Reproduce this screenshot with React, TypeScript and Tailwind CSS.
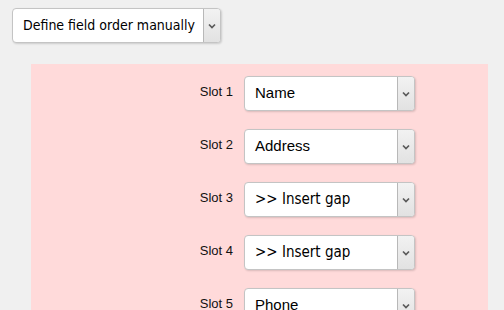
import React from 'react'

const TAHOMA = "font-['DejaVu_Sans_Condensed','DejaVu_Sans',sans-serif]"
const ARIAL = "font-['Liberation_Sans',Arial,sans-serif]"

function Chevron() {
  return (
    <svg width="8" height="6" viewBox="0 0 8 6" className="text-[#5a5a5a]">
      <path d="M1 1.5 L4 4.5 L7 1.5" fill="none" stroke="currentColor" strokeWidth="1.7" />
    </svg>
  )
}

function FakeSelect({
  value,
  width,
  font,
  size = 'text-[15px]',
}: {
  value: string
  width: string
  font: string
  size?: string
}) {
  return (
    <div
      className={`flex h-[35px] ${width} shrink-0 overflow-hidden rounded-[4px] border border-[#c4c4c4] bg-white shadow-[1px_1px_2px_rgba(0,0,0,0.15)]`}
    >
      <div className={`flex flex-1 items-center whitespace-nowrap pl-[10px] ${size} text-black ${font}`}>
        {value}
      </div>
      <div className="flex w-[17px] items-center justify-center border-l border-[#b8b8b8] bg-gradient-to-b from-[#f2f2f2] to-[#e2e2e2]">
        <Chevron />
      </div>
    </div>
  )
}

const slots = [
  { label: 'Slot 1', value: 'Name', font: ARIAL },
  { label: 'Slot 2', value: 'Address', font: ARIAL },
  { label: 'Slot 3', value: '>> Insert gap', font: TAHOMA },
  { label: 'Slot 4', value: '>> Insert gap', font: TAHOMA },
  { label: 'Slot 5', value: 'Phone', font: ARIAL },
]

export default function App() {
  return (
    <div className="h-[310px] w-full overflow-hidden bg-[#f0f0f0]">
      <div className="pl-[12px] pt-[8px]">
        <FakeSelect value="Define field order manually" width="w-[209px]" font={TAHOMA} size="text-[14px]" />
      </div>
      <div className="ml-[31px] mr-[16px] mt-[21px] flex flex-col gap-[18px] bg-[#ffdada] pt-[12px] pb-6">
        {slots.map((s) => (
          <div key={s.label} className="flex items-start">
            <div className={`w-[213px] shrink-0 pr-[11px] pt-[6px] text-right text-[13px] text-[#111] ${ARIAL}`}>
              {s.label}
            </div>
            <FakeSelect value={s.value} width="w-[171px]" font={s.font} />
          </div>
        ))}
      </div>
    </div>
  )
}
